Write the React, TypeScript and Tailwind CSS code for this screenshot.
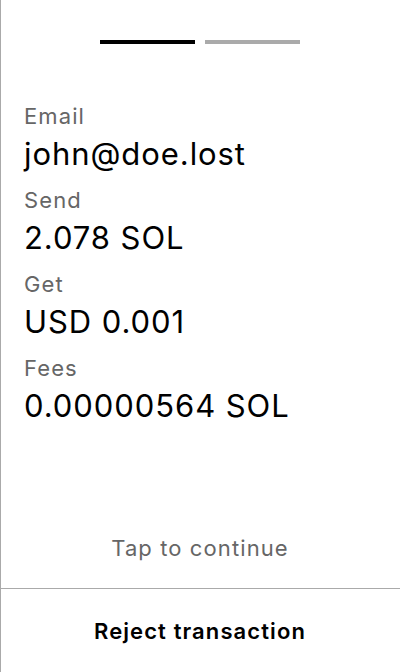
const rows = [
  { label: "Email", value: "john@doe.lost" },
  { label: "Send", value: "2.078 SOL" },
  { label: "Get", value: "USD 0.001" },
  { label: "Fees", value: "0.00000564 SOL" },
];

export default function App() {
  return (
    <div
      className="flex h-[672px] w-[400px] flex-col bg-white text-black shadow-[inset_1px_0_0_#aaaaaa]"
      style={{ fontFamily: "Inter, 'Noto Sans', sans-serif" }}
    >
      <div className="flex flex-1 flex-col">
        {/* step indicator */}
        <div className="flex justify-center gap-[10px] pt-10">
          <div className="h-1 w-[95px] bg-black" />
          <div className="h-1 w-[95px] bg-[#aaaaaa]" />
        </div>

        <div className="mt-[58px] flex flex-col px-6">
          {rows.map((row) => (
            <div key={row.label} className="flex h-[84px] flex-col">
              <span className="text-[22px] leading-[28px] tracking-wider text-[#666666]">{row.label}</span>
              <span className="mt-[6px] text-[31px] leading-[36px] tracking-[0.03em]">{row.value}</span>
            </div>
          ))}
        </div>

        <div className="mt-auto pb-[26px] text-center text-[22px] leading-[28px] tracking-wider text-[#666666]">
          Tap to continue
        </div>
      </div>

      <button className="flex h-[84px] items-center justify-center border-t border-[#aaaaaa] text-[22px] font-semibold leading-[28px] tracking-wider">
        Reject transaction
      </button>
    </div>
  );
}
